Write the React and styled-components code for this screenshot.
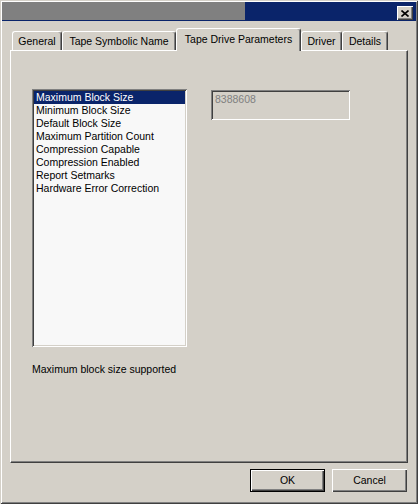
import React from 'react';
import styled, { createGlobalStyle } from 'styled-components';

const GlobalStyle = createGlobalStyle`
  body {
    margin: 0;
    background: #d4d0c8;
    font-family: "Liberation Sans", Arial, sans-serif;
    font-size: 10.5px;
    color: #000;
  }
`;

const face = '#d4d0c8';
const light = '#ffffff';
const shadow = '#808080';
const dark = '#404040';
const navy = '#0a246a';

const Window = styled.div`
  width: 418px;
  height: 504px;
  box-sizing: border-box;
  padding: 2px;
  background: ${face};
  box-shadow: inset 1px 1px ${face}, inset -1px -1px ${dark},
    inset 2px 2px ${light}, inset -2px -2px ${shadow};
  display: flex;
  flex-direction: column;
`;

const TitleBar = styled.div`
  display: flex;
  height: 19px;
  flex: none;
`;

const TitleIdle = styled.div`
  width: 243px;
  height: 18px;
  background: ${shadow};
  border-bottom: 1px solid ${navy};
`;

const TitleActive = styled.div`
  flex: 1;
  background: ${navy};
  display: flex;
  justify-content: flex-end;
  align-items: flex-start;
  padding: 4px 3px 0 0;
`;

const CloseButton = styled.div`
  width: 16px;
  height: 14px;
  box-sizing: border-box;
  background: ${face};
  box-shadow: inset 1px 1px ${light}, inset -1px -1px ${dark},
    inset -2px -2px ${shadow};
  display: flex;
  align-items: center;
  justify-content: center;
  padding-right: 1px;
`;

const Body = styled.div`
  flex: 1;
  display: flex;
  flex-direction: column;
  padding: 7px 8px 0 8px;
`;

const TabStrip = styled.div`
  display: flex;
  align-items: flex-end;
  height: 22px;
  padding-left: 2px;
  position: relative;
  z-index: 1;
`;

const Tab = styled.div`
  width: ${p => p.$w}px;
  height: ${p => (p.$active ? 23 : 19)}px;
  margin-bottom: ${p => (p.$active ? -1 : 0)}px;
  box-sizing: border-box;
  background: ${face};
  border-top: 1px solid ${light};
  border-left: 1px solid ${light};
  border-right: 1px solid ${dark};
  border-radius: 3px 3px 0 0;
  box-shadow: inset -1px 0 ${shadow};
  display: flex;
  justify-content: center;
  align-items: flex-start;
  padding-top: ${p => (p.$active ? 4 : 3)}px;
  white-space: nowrap;
  line-height: 13px;
`;

const TabPanel = styled.div`
  width: 398px;
  height: 413px;
  box-sizing: border-box;
  border-top: 1px solid ${light};
  border-left: 1px solid ${light};
  border-right: 1px solid ${dark};
  border-bottom: 1px solid ${dark};
  box-shadow: inset -1px -1px ${shadow};
  padding: 38px 0 0 21px;
`;

const ParamsRow = styled.div`
  display: flex;
  align-items: flex-start;
  gap: 24px;
`;

const ListBox = styled.div`
  width: 155px;
  height: 258px;
  box-sizing: border-box;
  background: #f8f8f8;
  padding: 2px;
  box-shadow: inset 1px 1px ${shadow}, inset -1px -1px ${light},
    inset 2px 2px ${dark}, inset -2px -2px ${face};
`;

const ListItem = styled.div`
  height: 13px;
  line-height: 13px;
  padding-left: 2px;
  white-space: nowrap;
  background: ${p => (p.$selected ? navy : 'transparent')};
  color: ${p => (p.$selected ? '#fff' : '#000')};
`;

const ValueField = styled.div`
  width: 139px;
  height: 30px;
  margin-top: 1px;
  box-sizing: border-box;
  padding: 3px 4px;
  line-height: 13px;
  color: ${shadow};
  box-shadow: inset 1px 1px ${shadow}, inset -1px -1px ${light},
    inset 2px 2px ${dark}, inset -2px -2px ${face};
`;

const Description = styled.div`
  margin-top: 16px;
  line-height: 13px;
`;

const ButtonRow = styled.div`
  display: flex;
  justify-content: flex-end;
  gap: 7px;
  margin-top: 6px;
  padding-right: 1px;
`;

const DialogButton = styled.div`
  width: 75px;
  height: 23px;
  box-sizing: border-box;
  display: flex;
  align-items: center;
  justify-content: center;
  background: ${face};
  line-height: 13px;
  box-shadow: ${p =>
    p.$default
      ? `inset 0 0 0 1px #000, inset 2px 2px ${light}, inset -2px -2px ${dark}, inset -3px -3px ${shadow}`
      : `inset 1px 1px ${light}, inset -1px -1px ${dark}, inset -2px -2px ${shadow}`};
`;

const tabs = [
  { label: 'General', w: 50 },
  { label: 'Tape Symbolic Name', w: 114 },
  { label: 'Tape Drive Parameters', w: 125, active: true },
  { label: 'Driver', w: 41 },
  { label: 'Details', w: 46 },
];

const params = [
  'Maximum Block Size',
  'Minimum Block Size',
  'Default Block Size',
  'Maximum Partition Count',
  'Compression Capable',
  'Compression Enabled',
  'Report Setmarks',
  'Hardware Error Correction',
];

const App = () => (
  <Window>
    <GlobalStyle />
    <TitleBar>
      <TitleIdle />
      <TitleActive>
        <CloseButton>
          <svg width="8" height="7" viewBox="0 0 8 7">
            <path d="M0.5 0.5 L7.5 6.5 M7.5 0.5 L0.5 6.5" stroke="#000" strokeWidth="1.6" />
          </svg>
        </CloseButton>
      </TitleActive>
    </TitleBar>
    <Body>
      <TabStrip>
        {tabs.map(t => (
          <Tab key={t.label} $w={t.w} $active={t.active}>{t.label}</Tab>
        ))}
      </TabStrip>
      <TabPanel>
        <ParamsRow>
          <ListBox>
            {params.map((p, i) => (
              <ListItem key={p} $selected={i === 0}>{p}</ListItem>
            ))}
          </ListBox>
          <ValueField>8388608</ValueField>
        </ParamsRow>
        <Description>Maximum block size supported</Description>
      </TabPanel>
      <ButtonRow>
        <DialogButton $default>OK</DialogButton>
        <DialogButton>Cancel</DialogButton>
      </ButtonRow>
    </Body>
  </Window>
);

export default App;
